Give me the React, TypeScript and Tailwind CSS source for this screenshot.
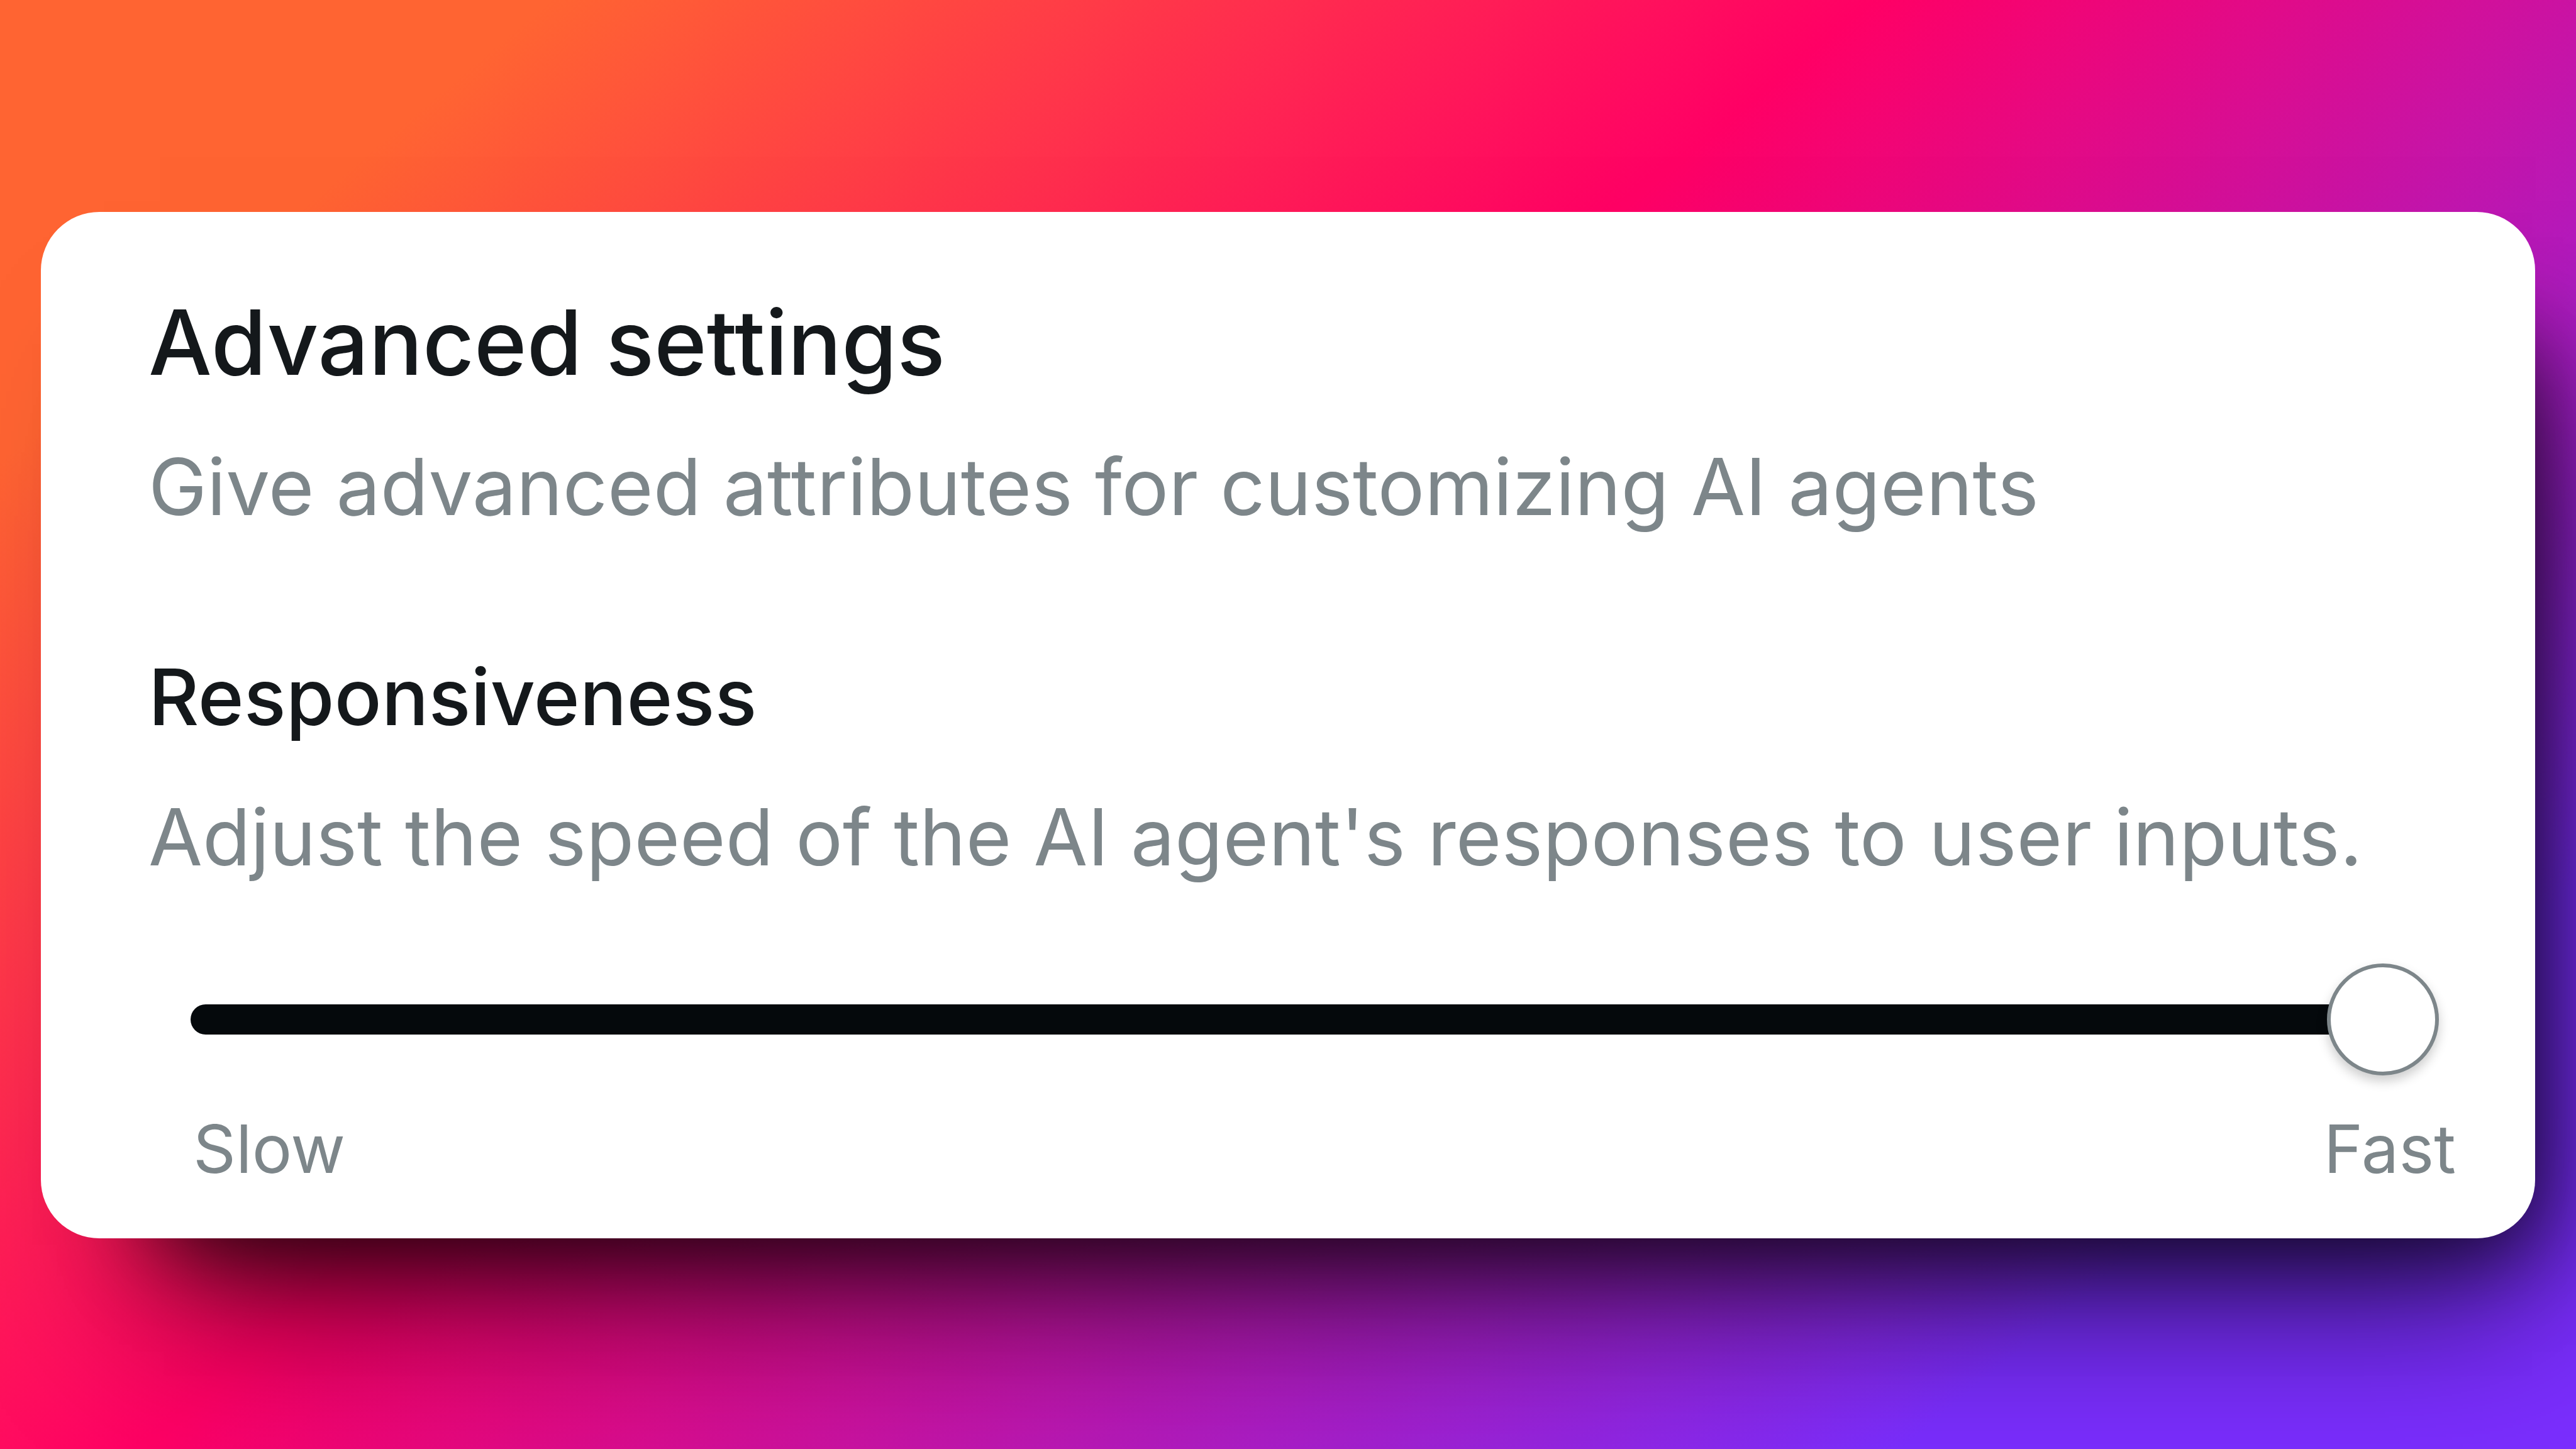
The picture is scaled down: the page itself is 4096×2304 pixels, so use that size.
function SliderTrack() {
  return (
    <div className="flex items-center w-[3575px] h-[184px]">
      <div className="flex-1 h-[48px] rounded-l-full bg-[#05090c] -mr-2" />
      <div className="relative size-[178px] rounded-full bg-white border-[6px] border-[#7d868a] shadow-[0_9px_18px_rgba(0,0,0,0.2)]" />
    </div>
  )
}

export default function App() {
  return (
    <div className="w-[4096px] h-[2304px] overflow-hidden pt-[337px] pl-[65px] font-['Inter',sans-serif] bg-[linear-gradient(140deg,#ff6432_12.8%,#ff0065_43.52%,#7b2eff_84.34%)]">
      {/* Settings card */}
      <div className="w-[3966px] h-[1632px] rounded-[93px] bg-white shadow-[95px_190px_250px_-95px_rgba(0,0,0,0.65),95px_110px_140px_-100px_rgba(0,0,0,0.75)] pl-[171px] pt-[117px] whitespace-nowrap">
        <h1 className="text-[142.3px] leading-[180px] font-medium text-[#14181b]">Advanced settings</h1>
        <p className="mt-[60px] text-[124.7px] leading-[160px] text-[#7d868a]">
          Give advanced attributes for customizing AI agents
        </p>

        <h2 className="mt-[174px] text-[124.3px] leading-[160px] font-medium text-[#14181b]">Responsiveness</h2>
        <p className="mt-[63px] text-[124.7px] leading-[160px] text-[#7d868a]">
          Adjust the speed of the AI agent's responses to user inputs.
        </p>

        {/* Slider */}
        <div className="mt-[118px] pl-[67px]">
          <SliderTrack />
          <div className="mt-[44px] w-[3602px] pl-1 flex justify-between text-[106px] leading-[140px] text-[#7d868a]">
            <span>Slow</span>
            <span>Fast</span>
          </div>
        </div>
      </div>
    </div>
  )
}
